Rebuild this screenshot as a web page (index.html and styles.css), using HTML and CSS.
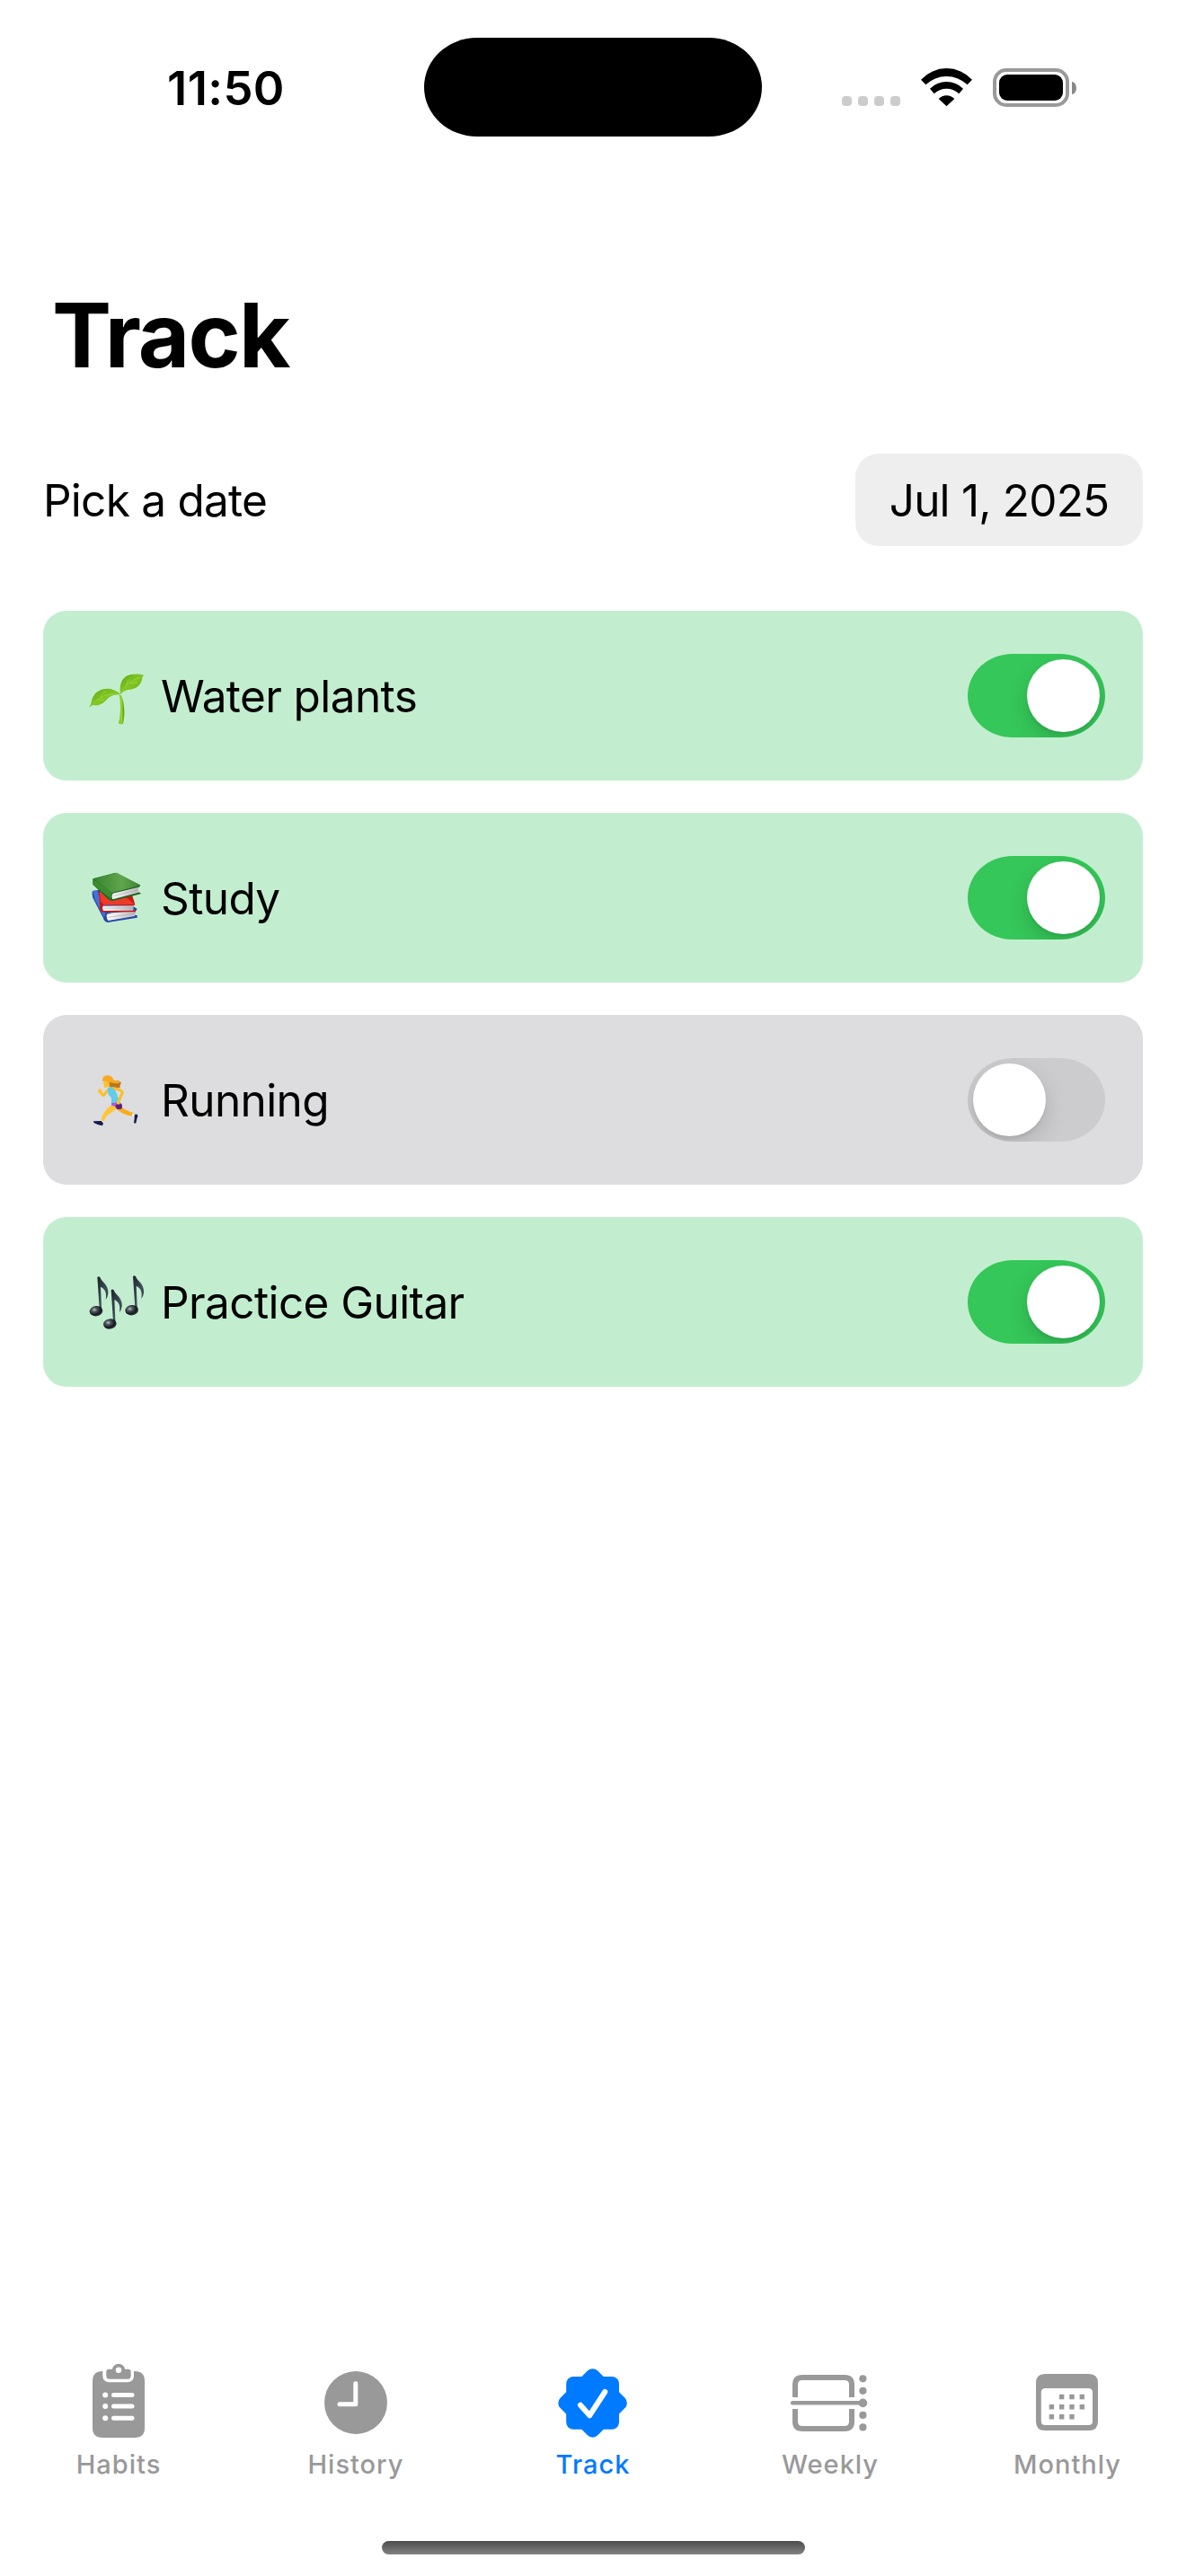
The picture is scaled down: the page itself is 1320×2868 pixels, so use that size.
FILE: index.html
```html
<!DOCTYPE html>
<html lang="en">
<head>
<meta charset="utf-8">
<title>Track</title>
<link rel="stylesheet" href="styles.css">
</head>
<body>
<div class="screen">
  <header class="status">
    <div class="status-left"><span class="clock">11:50</span></div>
    <div class="island"></div>
    <div class="status-right">
      <div class="cell"><i></i><i></i><i></i><i></i></div>
      <svg class="wifi" viewBox="1025 75 57 43">
        <path d="M1025 87.7A38.5 38.5 0 0 1 1082 87.7L1076.7 93.3A33.6 33.6 0 0 0 1030.3 93.3Z"/>
        <path d="M1035 97.7A26 26 0 0 1 1072 97.7L1067.3 103.3A20 20 0 0 0 1039.7 103.3Z"/>
        <path d="M1044.7 109A12 12 0 0 1 1062.3 109L1053.5 117.2Z"/>
      </svg>
      <div class="battery"><div class="shell"><div class="charge"></div></div><div class="nub"></div></div>
    </div>
  </header>

  <main class="content">
    <h1 class="title">Track</h1>
    <div class="date-row">
      <span class="date-label">Pick a date</span>
      <button class="date-pill"><span class="date-value">Jul 1, 2025</span></button>
    </div>

    <ul class="habits">
      <li class="habit done">
        <svg class="emoji" viewBox="54 67 192 192" aria-hidden="true">
          <defs>
            <linearGradient id="leaf" x1="0" y1="0" x2="1" y2="1"><stop offset="0" stop-color="#5cab10"/><stop offset=".5" stop-color="#82c624"/><stop offset="1" stop-color="#56a507"/></linearGradient>
            <linearGradient id="stem"><stop offset="0" stop-color="#78bd18"/><stop offset=".5" stop-color="#9bd433"/><stop offset="1" stop-color="#4f9a05"/></linearGradient>
          </defs>
          <path fill="url(#stem)" d="M158 160L165 160C174 180 179 218 171 255Q163 260 156 254C162 230 165 190 158 160Z"/>
          <path fill="url(#leaf)" d="M162 157C156 118 172 90 206 90Q225 88 241 93Q234 96 235 103C230 133 208 140 186 142Q172 145 162 157Z"/>
          <path fill="url(#leaf)" d="M163 158C132 128 92 136 74 160Q65 172 64 188Q61 194 57 203Q62 196 70 193C92 196 105 188 119 171Q136 156 163 158Z"/>
          <path fill="none" stroke="#a5d94a" stroke-width="2" d="M163 153Q180 120 224 100M72 187Q100 154 154 156M183 127Q184 110 196 104M194 119L218 118M98 167Q100 150 114 148M88 175L108 176"/>
        </svg>
        <span class="name">Water plants</span>
        <span class="switch on"><span class="knob"></span></span>
      </li>
      <li class="habit done">
        <svg class="emoji" viewBox="54 52 192 192" aria-hidden="true">
          <defs>
            <linearGradient id="green" x1="0" x2="1"><stop offset="0" stop-color="#37832f"/><stop offset=".6" stop-color="#5fa64c"/><stop offset="1" stop-color="#3c8433"/></linearGradient>
            <linearGradient id="pages" x1="0" x2="1"><stop offset="0" stop-color="#fff"/><stop offset="1" stop-color="#b9b9bd"/></linearGradient>
          </defs>
          <path fill="#2448a8" d="M69 124L92 120L190 165L218 184L214 190L120 198L218 205L218 213L119 229Q107 226 105 215L71 149Q66 136 69 124Z"/>
          <path fill="#4772d8" d="M70 124L84 122L113 190L108 213L78 155Z"/>
          <path fill="url(#pages)" d="M117 201L190 191L214 193L210 208L121 223Q114 213 117 201Z"/>
          <path fill="#c91714" d="M90 121L200 134L211 169L205 174L110 170L102 176L104 187L213 188L213 194L102 195Q91 188 93 171Z"/>
          <path fill="#ed3a28" d="M92 124L185 148L209 168L107 171L96 158Z"/>
          <path fill="url(#pages)" d="M104 174L206 173L205 189L105 190Q99 182 104 174Z"/>
          <path fill="#1e641e" d="M70 83L145 63L228 104L227 109L222 112L222 128L230 131L229 134L134 158L121 151L70 102Z"/>
          <path fill="url(#green)" d="M71 83L151 63L229 105L134 130Z"/>
          <path fill="#3b8b2f" d="M70 84L134 128L130 151L71 102Z"/>
          <path fill="url(#pages)" d="M137 132L222 111L222 129L136 152Q131 141 137 132Z"/>
          <path stroke="#999" stroke-width="1.5" fill="none" d="M137 141L221 120M106 181H204M119 212L209 200"/>
        </svg>
        <span class="name">Study</span>
        <span class="switch on"><span class="knob"></span></span>
      </li>
      <li class="habit">
        <svg class="emoji" viewBox="54 68 192 192" aria-hidden="true">
          <path fill="#ba761a" d="M120 96Q139 104 153 98L164 104Q164 112 160 115Q163 118 160 122Q145 124 137 120Q125 124 119 113Z"/>
          <path fill="#ffbf2d" d="M105 103L123 98L127 117L113 122Q104 121 107 113Z"/>
          <path fill="#f8a921" d="M103 101C99 86 112 78 126 82Q137 86 139 96Q150 101 163 101Q157 111 143 107L127 105Q116 99 103 101Z"/>
          <path fill="none" stroke="#ffbd25" stroke-width="9" stroke-linecap="round" stroke-linejoin="round" d="M125 125L105 148L94 136"/>
          <circle cx="94" cy="133" r="7" fill="#ffc431"/>
          <path fill="#ffc533" d="M134 178L151 189C140 205 119 209 115 218L105 238L97 235L103 213Q112 194 134 178Z"/>
          <path fill="#f7ac1d" d="M158 181C176 196 189 198 207 208L202 216C182 216 159 203 146 190Z"/>
          <path fill="#ad58e7" d="M132 171L157 168Q169 177 167 190L153 195L144 184L132 181Z"/>
          <path fill="#5b227b" d="M150 176L165 175Q171 184 165 193L151 194L145 184Z"/>
          <path fill="#62cce9" d="M121 122Q136 115 144 127L158 165Q149 176 132 172L132 156Q116 145 121 122Z"/>
          <path fill="none" stroke="#ffbd25" stroke-width="9" stroke-linecap="round" stroke-linejoin="round" d="M142 124C157 127 166 130 169 138L156 168"/>
          <circle cx="155" cy="172" r="6" fill="#ffc431"/>
          <path fill="#fff" d="M97 231L107 235L105 240L96 238ZM202 208L210 211L208 218L201 215Z"/>
          <path fill="#171b4c" d="M72 234L98 233L105 240L102 249L88 246L73 239ZM209 211L219 211Q222 218 217 226L214 240Q209 243 207 238L209 225Z"/>
        </svg>
        <span class="name">Running</span>
        <span class="switch"><span class="knob"></span></span>
      </li>
      <li class="habit done">
        <svg class="emoji" viewBox="54 82 192 192" aria-hidden="true">
          <defs>
            <radialGradient id="head" cx=".38" cy=".35" r=".7"><stop offset="0" stop-color="#b9c0c7"/><stop offset=".3" stop-color="#4e555c"/><stop offset=".7" stop-color="#16191d"/><stop offset="1" stop-color="#30404c"/></radialGradient>
            <linearGradient id="flag" x1="0" y1="0" x2="1" y2="1"><stop offset="0" stop-color="#1c2227"/><stop offset=".6" stop-color="#40505c"/><stop offset="1" stop-color="#20272d"/></linearGradient>
            <g id="note">
              <path fill="url(#flag)" d="M-1 1Q3 -4 8 1C13 17 37 25 35 55Q34 66 27 76C31 53 25 40 10 33L13 103L6 105Z"/>
              <ellipse cx="-5" cy="114" rx="22" ry="17" fill="url(#head)" transform="rotate(-8 -5 114)"/>
            </g>
          </defs>
          <use href="#note" x="86" y="93"/>
          <use href="#note" x="205" y="90"/>
          <use href="#note" x="132" y="136"/>
        </svg>
        <span class="name">Practice Guitar</span>
        <span class="switch on"><span class="knob"></span></span>
      </li>
    </ul>
  </main>

  <nav class="tabs">
    <a class="tab">
      <svg class="icon" viewBox="0 0 96 96">
        <path fill-rule="evenodd" d="M30.3 14V19Q30.3 26.3 37.6 26.3H57.7Q65 26.3 65 19V14H66Q77 14 77 25V77Q77 88 66 88H30Q19 88 19 77V25Q19 14 30 14Z"/>
        <path fill-rule="evenodd" d="M37 11.8H40.8A7.3 7.3 0 0 1 55.2 11.8H58.7Q61.7 11.8 61.7 15V18.8Q61.7 22.7 58 22.7H38Q34.3 22.7 34.3 18.8V15Q34.3 11.8 37 11.8ZM51.2 12.7A3.2 3.2 0 1 0 44.8 12.7A3.2 3.2 0 1 0 51.2 12.7Z"/>
        <g class="cut"><circle cx="33.2" cy="40.6" r="3"/><circle cx="33.2" cy="53" r="3"/><circle cx="33.2" cy="66.2" r="3"/>
        <path d="M42.5 40.6H63M42.5 53H63M42.5 66.2H63"/></g>
      </svg>
      <span>Habits</span>
    </a>
    <a class="tab">
      <svg class="icon" viewBox="0 0 96 96">
        <circle cx="48" cy="49" r="35"/>
        <path class="hands" d="M47.8 27.8V50.7H30"/>
      </svg>
      <span>History</span>
    </a>
    <a class="tab active">
      <svg class="icon" viewBox="0 0 96 96">
        <rect x="18.2" y="20" width="58.8" height="58.8" rx="8"/>
        <rect x="18.2" y="20" width="58.8" height="58.8" rx="8" transform="rotate(45 47.6 49.4)"/>
        <path class="hands check" d="M34 51.8L44.3 63.2L61.3 37"/>
      </svg>
      <span>Track</span>
    </a>
    <a class="tab">
      <svg class="icon" viewBox="0 0 96 96">
        <path class="frame" d="M9 43V29Q9 21 17 21H64Q72 21 72 29V43M9 56V70Q9 78 17 78H64Q72 78 72 70V56"/>
        <path class="rule" d="M6.2 49.3H84"/>
        <circle cx="84.4" cy="22.3" r="4.1"/><circle cx="84.4" cy="35.8" r="4.1"/><circle cx="84.4" cy="49.4" r="4.8"/><circle cx="84.4" cy="62.9" r="4.1"/><circle cx="84.4" cy="76.4" r="4.1"/>
      </svg>
      <span>Weekly</span>
    </a>
    <a class="tab">
      <svg class="icon" viewBox="0 0 96 96">
        <path fill-rule="evenodd" d="M23 17H72Q82 17 82 27V70Q82 80 72 80H23Q13 80 13 70V27Q13 17 23 17ZM23.5 33Q18.8 33 18.8 37.5V69.5Q18.8 74 23.5 74H71.5Q76 74 76 69.5V37.5Q76 33 71.5 33Z"/>
        <path d="M39 39.8h5.4v5.4H39zM50.3 39.8h5.4v5.4h-5.4zM61.6 39.8h5.4v5.4h-5.4zM27.7 51h5.4v5.4h-5.4zM39 51h5.4v5.4H39zM50.3 51h5.4v5.4h-5.4zM61.6 51h5.4v5.4h-5.4zM27.7 62.1h5.4v5.4h-5.4zM39 62.1h5.4v5.4H39zM50.3 62.1h5.4v5.4h-5.4z"/>
      </svg>
      <span>Monthly</span>
    </a>
  </nav>
  <div class="home"></div>
</div>
</body>
</html>
```
FILE: styles.css
```css
* { box-sizing: border-box; }
body {
  margin: 0;
  background: #fff;
  color: #000;
  font-family: Inter, "Liberation Sans", sans-serif;
}
.screen {
  width: 1320px;
  height: 2868px;
  display: flex;
  flex-direction: column;
}

.status {
  height: 153px;
  padding-top: 42px;
  display: grid;
  grid-template-columns: 472px 376px 472px;
}
.status-left {
  display: flex;
  justify-content: center;
  padding-left: 31px;
}
.clock {
  font-size: 52.5px;
  line-height: 112px;
  font-weight: 600;
  letter-spacing: 0.4px;
}
.island { height: 110px; border-radius: 59px / 55px; background: #000; }
.status-right {
  display: flex;
  align-items: flex-end;
  padding: 0 0 35px 89px;
}
.cell { display: flex; gap: 7px; padding-bottom: 1px; margin-right: 77px; width: 0; }
.cell i { flex: none; width: 11px; height: 11px; border-radius: 4px; background: #ccc; }
.wifi { width: 57px; height: 43px; margin: 0 23px 0 11px; }
.battery { display: flex; align-items: center; gap: 3px; }
.shell { width: 85px; height: 43px; padding: 3px; border: 4px solid #999; border-radius: 15px; }
.charge { height: 29px; border-radius: 9px; background: #000; }
.nub { width: 5px; height: 14px; border-radius: 0 5px 5px 0 / 0 7px 7px 0; background: #888; }

.content { flex: 1; padding: 160px 48px 0; }
.title {
  margin: 0 0 72px 10px;
  font-size: 99px;
  line-height: 120px;
  font-weight: 700;
  letter-spacing: -1.8px;
}
.date-row {
  display: flex;
  justify-content: space-between;
  align-items: center;
  height: 103px;
  margin-bottom: 72px;
}
.date-label, .date-value, .name {
  font-size: 49.5px;
  line-height: 60px;
  letter-spacing: -0.6px;
}
.date-label { letter-spacing: -0.75px; }
.date-value { letter-spacing: -0.8px; }
.date-pill {
  width: 320px;
  height: 103px;
  padding: 0;
  border: 0;
  border-radius: 26px;
  background: #eee;
  color: inherit;
  font-family: inherit;
}

.habits {
  list-style: none;
  margin: 0;
  padding: 0;
  display: flex;
  flex-direction: column;
  gap: 36px;
}
.habit {
  display: flex;
  align-items: center;
  height: 189px;
  padding: 0 42px 0 50px;
  border-radius: 26px;
  background: #dddddf;
}
.done { background: #c2eecf; }
.emoji { width: 64px; height: 64px; margin-right: 17px; }
.name { flex: 1; }
.switch {
  display: flex;
  width: 153px;
  height: 93px;
  padding: 6px;
  border-radius: 50px / 46.5px;
  background: #ccccce;
  overflow: hidden;
}
.on { justify-content: flex-end; background: #35c759; }
.knob {
  width: 81px;
  height: 81px;
  border-radius: 50%;
  background: #fff;
  box-shadow: 0 9px 24px rgba(0, 0, 0, .15), 0 3px 3px rgba(0, 0, 0, .06);
}

.tabs {
  display: grid;
  grid-template-columns: repeat(5, 1fr);
  height: 203px;
}
.tab {
  display: flex;
  flex-direction: column;
  align-items: center;
  color: #999;
  font-size: 29px;
  line-height: 36px;
  font-weight: 460;
  letter-spacing: 1px;
}
.active { color: #007aff; }
.icon { width: 96px; height: 96px; margin-bottom: 4px; fill: currentColor; }
.cut { fill: #fff; stroke: none; }
.cut path { stroke: #fff; stroke-width: 5; stroke-linecap: round; }
.hands { fill: none; stroke: #fff; stroke-width: 5; stroke-linecap: round; stroke-linejoin: round; }
.check { stroke-width: 6; }
.frame { fill: none; stroke: currentColor; stroke-width: 6; }
.rule { stroke: currentColor; stroke-width: 4.6; stroke-linecap: round; }

.home {
  width: 471px;
  height: 15px;
  margin: 0 auto 24px;
  border-radius: 8px;
  background: linear-gradient(#4c4c4c, #828282);
}
```
